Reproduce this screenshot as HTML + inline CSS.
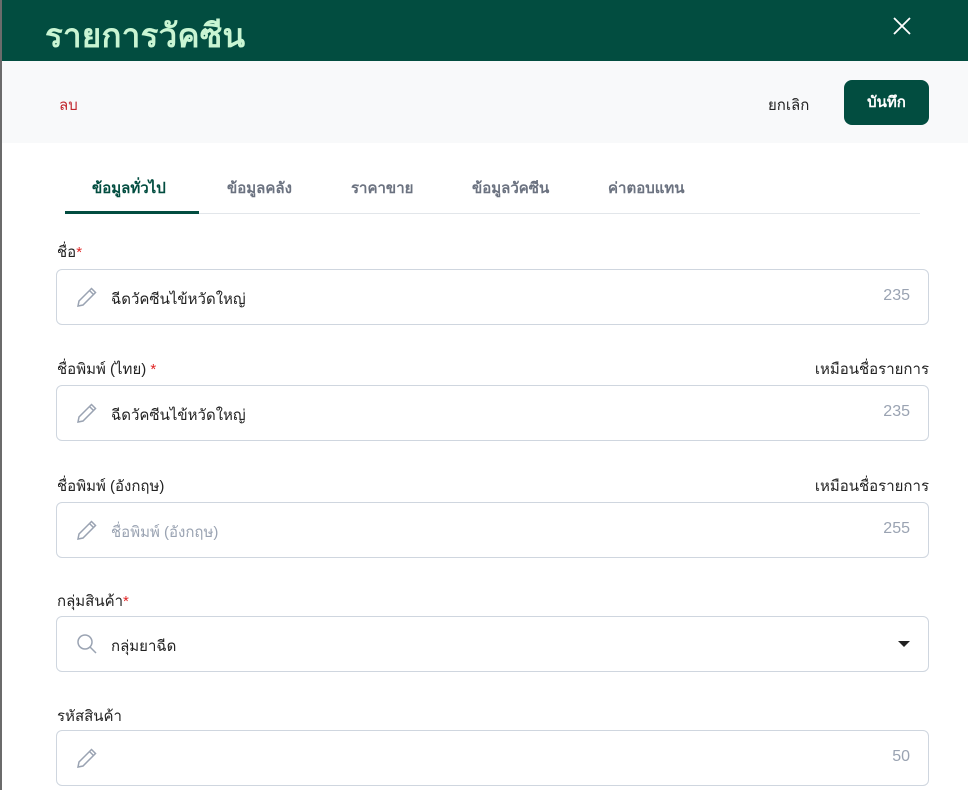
<!DOCTYPE html>
<html><head><meta charset="utf-8"><style>
*{box-sizing:border-box;margin:0;padding:0}
body{width:968px;height:790px;overflow:hidden;background:#fff;font-family:"Liberation Sans","Noto Sans CJK SC",sans-serif;position:relative}
.edge{position:absolute;left:0;top:0;width:2px;height:790px;background:#6b6b6b;z-index:5}
.hdr{position:absolute;left:0;top:0;width:968px;height:61px;background:#024d40}
.hdr h1{position:absolute;left:45px;top:9px;font-size:33px;font-weight:bold;color:#c9f5d3;letter-spacing:0.3px}
.x{position:absolute;left:893px;top:17px}
.bar{position:absolute;left:0;top:61px;width:968px;height:82px;background:#f8f9fa}
.del{position:absolute;left:59px;top:32px;font-size:15px;color:#c0262d}
.cancel{position:absolute;left:768px;top:32px;font-size:15px;color:#222}
.save{position:absolute;left:844px;top:19px;width:85px;height:45px;background:#024d40;border-radius:8px;color:#fff;font-size:15px;font-weight:bold;text-align:center;line-height:45px}
.tabs{position:absolute;left:65px;top:164px;width:855px;height:50px;border-bottom:1px solid #e2e6ea}
.tab{position:absolute;top:12px;font-size:15px;color:#6b7280;font-weight:bold}
.tab.a{color:#024d40}
.ul{position:absolute;left:0;bottom:-1px;width:134px;height:3px;background:#024d40}
.lbl{position:absolute;left:57px;font-size:15px;color:#222}
.lbl b{color:#e02424;font-weight:normal}
.rl{position:absolute;right:39px;font-size:15px;color:#222}
.inp{position:absolute;left:56px;width:873px;height:56px;border:1px solid #cfd6df;border-radius:6px}
.inp svg{position:absolute;left:18px;top:15px}
.inp .t{position:absolute;left:54px;top:17px;font-size:15px;color:#222}
.inp .t.p{color:#9aa3b2}
.inp .n{position:absolute;right:18px;top:17px;font-size:16px;color:#9aa3b2}
</style></head><body>
<div class="edge"></div>
<div class="hdr"><h1>รายการวัคซีน</h1>
<svg class="x" width="18" height="18" viewBox="0 0 18 18"><path d="M1 1L17 17M17 1L1 17" stroke="#fff" stroke-width="1.8"/></svg></div>
<div class="bar"><span class="del">ลบ</span><span class="cancel">ยกเลิก</span><div class="save">บันทึก</div></div>
<div class="tabs">
<span class="tab a" style="left:27px">ข้อมูลทั่วไป</span>
<span class="tab" style="left:162px">ข้อมูลคลัง</span>
<span class="tab" style="left:286px">ราคาขาย</span>
<span class="tab" style="left:407px">ข้อมูลวัคซีน</span>
<span class="tab" style="left:543px">ค่าตอบแทน</span>
<div class="ul"></div></div>

<div class="lbl" style="top:240px">ชื่อ<b>*</b></div>
<div class="inp" style="top:269px"><svg width="24" height="24" viewBox="0 0 24 24" fill="none" stroke="#9aa3b2" stroke-width="1.5"><path d="M16.5 3.5l4 4L8 20l-5 1 1-5z M14.5 5.5l4 4"/></svg><span class="t">ฉีดวัคซีนไข้หวัดใหญ่</span><span class="n">235</span></div>

<div class="lbl" style="top:357px">ชื่อพิมพ์ (ไทย) <b>*</b></div><div class="rl" style="top:357px">เหมือนชื่อรายการ</div>
<div class="inp" style="top:385px"><svg width="24" height="24" viewBox="0 0 24 24" fill="none" stroke="#9aa3b2" stroke-width="1.5"><path d="M16.5 3.5l4 4L8 20l-5 1 1-5z M14.5 5.5l4 4"/></svg><span class="t">ฉีดวัคซีนไข้หวัดใหญ่</span><span class="n">235</span></div>

<div class="lbl" style="top:474px">ชื่อพิมพ์ (อังกฤษ)</div><div class="rl" style="top:474px">เหมือนชื่อรายการ</div>
<div class="inp" style="top:502px"><svg width="24" height="24" viewBox="0 0 24 24" fill="none" stroke="#9aa3b2" stroke-width="1.5"><path d="M16.5 3.5l4 4L8 20l-5 1 1-5z M14.5 5.5l4 4"/></svg><span class="t p">ชื่อพิมพ์ (อังกฤษ)</span><span class="n">255</span></div>

<div class="lbl" style="top:589px">กลุ่มสินค้า<b>*</b></div>
<div class="inp" style="top:616px"><svg width="24" height="24" viewBox="0 0 24 24" fill="none" stroke="#9aa3b2" stroke-width="1.5"><circle cx="10" cy="10" r="7"/><path d="M15 15l6 6"/></svg><span class="t">กลุ่มยาฉีด</span><svg style="left:841px;top:23px" width="12" height="8" viewBox="0 0 12 8"><path d="M0 1h12L6 7z" fill="#222"/></svg></div>

<div class="lbl" style="top:704px">รหัสสินค้า</div>
<div class="inp" style="top:730px"><svg width="24" height="24" viewBox="0 0 24 24" fill="none" stroke="#9aa3b2" stroke-width="1.5"><path d="M16.5 3.5l4 4L8 20l-5 1 1-5z M14.5 5.5l4 4"/></svg><span class="n">50</span></div>
</body></html>
